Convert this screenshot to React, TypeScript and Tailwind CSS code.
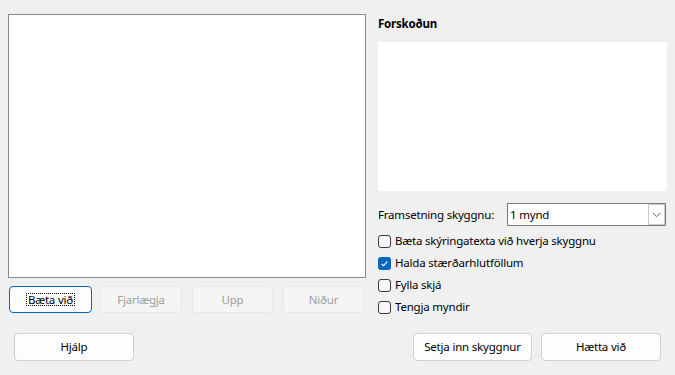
import React from 'react';

const font = "font-['Segoe_UI','Noto_Sans',sans-serif] tracking-[-0.2px]";

const Btn = ({ label, w, disabled = false, focused = false, h = 'h-[27px]' }: { label: string; w: string; disabled?: boolean; focused?: boolean; h?: string }) => (
    <div
        className={`${w} ${h} flex items-center justify-center rounded-[4px] border text-[11.5px] ${
            focused
                ? 'border-[#0067c0] bg-[#fdfdfd] text-black'
                : disabled
                ? 'border-[#e8e8e8] bg-[#f5f5f5] text-[#9d9d9d]'
                : 'border-[#d0d0d0] bg-[#fdfdfd] text-black'
        }`}
    >
        {focused ? (
            <span className="border border-dotted border-black px-[1px] leading-[12px] h-[13px] flex items-center">{label}</span>
        ) : (
            label
        )}
    </div>
);

const Check = ({ label, checked = false }: { label: string; checked?: boolean }) => (
    <div className="h-[22px] flex items-center gap-[4px]">
        {checked ? (
            <div className="w-[13px] h-[13px] rounded-[3px] bg-[#0067c0] flex items-center justify-center">
                <svg width="9" height="9" viewBox="0 0 9 9" fill="none">
                    <path d="M1.5 4.8 L3.5 6.7 L7.5 2.3" stroke="white" strokeWidth="1.1" />
                </svg>
            </div>
        ) : (
            <div className="w-[13px] h-[13px] rounded-[3px] border border-[#3a3a3a] bg-[#f7f7f7]" />
        )}
        <span className="text-[11.5px] text-black">{label}</span>
    </div>
);

export default function App() {
    return (
        <div className={`w-[675px] h-[375px] bg-[#f0f0f0] flex flex-col overflow-hidden ${font}`}>
            <div className="h-[319px] flex pt-[14px]">
                {/* left: list + buttons */}
                <div className="ml-[8px] w-[358px] flex flex-col">
                    <div className="h-[264px] bg-white border border-[#858a91]"></div>
                    <div className="mt-[8px] flex pl-[1px]">
                        <Btn label="Bæta við" w="w-[83px]" focused />
                        <div className="ml-[8px]"><Btn label="Fjarlægja" w="w-[82px]" disabled /></div>
                        <div className="ml-[10px]"><Btn label="Upp" w="w-[81px]" disabled /></div>
                        <div className="ml-[10px]"><Btn label="Niður" w="w-[81px]" disabled /></div>
                    </div>
                </div>

                {/* right: preview + options */}
                <div className="ml-[12px] w-[289px] flex flex-col">
                    <div className="mt-[2px] text-[11.5px] leading-[16px] font-bold text-black">Forskoðun</div>
                    <div className="mt-[10px] h-[149px] bg-white"></div>
                    <div className="mt-[12px] h-[23px] flex items-center">
                        <span className="text-[11.5px] text-black w-[129px]">Framsetning skyggnu:</span>
                        <div className="w-[159px] h-[23px] bg-white border border-[#7a7a7a] flex items-center">
                            <span className="pl-[2px] text-[11.5px] text-black flex-1">1 mynd</span>
                            <div className="w-[17px] h-[21px] border border-[#cccccc] bg-white flex items-center justify-center">
                                <svg width="9" height="6" viewBox="0 0 9 6" fill="none">
                                    <path d="M0.8 1 L4.5 4.7 L8.2 1" stroke="#606060" strokeWidth="1" />
                                </svg>
                            </div>
                        </div>
                    </div>
                    <div className="mt-[4px] flex flex-col">
                        <Check label="Bæta skýringatexta við hverja skyggnu" />
                        <Check label="Halda stærðarhlutföllum" checked />
                        <Check label="Fylla skjá" />
                        <Check label="Tengja myndir" />
                    </div>
                </div>
            </div>

            {/* bottom row */}
            <div className="mt-[14px] flex px-[14px]">
                <Btn label="Hjálp" w="w-[120px]" h="h-[28px]" />
                <div className="ml-auto flex gap-[9px]">
                    <Btn label="Setja inn skyggnur" w="w-[119px]" h="h-[28px]" />
                    <Btn label="Hætta við" w="w-[120px]" h="h-[28px]" />
                </div>
            </div>
        </div>
    );
}
